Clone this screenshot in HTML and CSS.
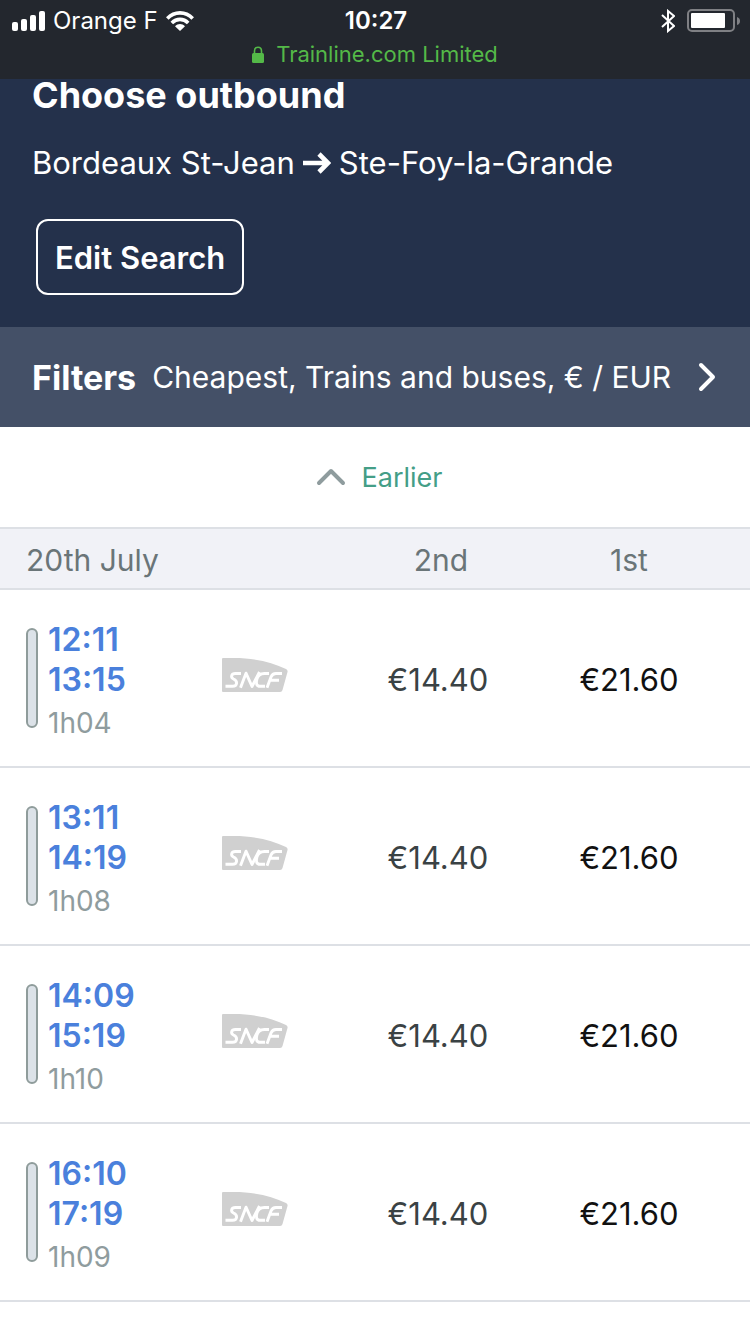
FILE: index.html
```html
<!DOCTYPE html>
<html lang="en">
<head>
    <meta charset="UTF-8">
    <meta name="viewport" content="width=device-width, initial-scale=1.0">
    <title>Choose outbound</title>
    <link rel="stylesheet" href="styles.css">
</head>
<body>
    <!-- SNCF logo, reused in each row -->
    <svg class="sprite" aria-hidden="true">
        <symbol id="sncf" viewBox="0 0 66 34">
            <path d="M1 0H12C32 0 50 4 64 11Q66 12 65.500 14L60.500 32Q60 34 58 34H1Q0 34 0 33V1Q0 0 1 0Z" fill="#d0d0d0"/>
            <g fill="none" stroke="#fff" stroke-width="2.900" stroke-linejoin="round">
                <path d="M19 15.500H13.500C9 15.500 8.500 19.500 11.500 21C16 23 15.500 28.300 10.500 28.300H3.500"/>
                <path d="M18.500 29.800L24 15.200L30 28.500L37.500 14"/>
                <path d="M47 15.500H42.500C38 15.500 35.500 18.500 34.800 21.500C33.800 25.500 34.500 28.300 38 28.300H43"/>
                <path d="M60 15.500H54C51 15.500 49.800 17 49 19L45 29.800M48 22.300H57"/>
            </g>
        </symbol>
    </svg>

    <div class="status-bar">
        <div class="status-row">
            <div class="carrier">
                <svg width="33" height="20" viewBox="0 0 33 20" fill="#fff">
                    <rect x="0" y="11" width="6" height="9" rx="2"/>
                    <rect x="9" y="8" width="6" height="12" rx="2"/>
                    <rect x="18" y="4" width="6" height="16" rx="2"/>
                    <rect x="27" y="0" width="6" height="20" rx="2"/>
                </svg>
                <span>Orange F</span>
                <svg width="28" height="20" viewBox="0 0 28 20">
                    <g fill="none" stroke="#fff" stroke-width="3.600">
                        <path d="M1.300 7.400C8.500 0 19.500 0 26.700 7.400"/>
                        <path d="M5.800 12C10.500 7.200 17.500 7.200 22.200 12"/>
                    </g>
                    <path d="M9 15.200C12 12.400 16 12.400 19 15.200L14 20Z" fill="#fff"/>
                </svg>
            </div>
            <span class="clock">10:27</span>
            <div class="power">
                <svg width="14" height="24" viewBox="0 0 14 24" fill="none" stroke="#fff" stroke-width="2">
                    <path d="M1 6L13 17L7 22V2L13 7L1 18"/>
                </svg>
                <svg width="53" height="24" viewBox="0 0 53 24">
                    <rect x="1" y="1" width="46" height="21" rx="4" fill="none" stroke="#7f8084" stroke-width="2"/>
                    <rect x="4" y="4" width="34" height="15" rx="1" fill="#fff"/>
                    <path d="M50 8Q53 9 53 12T50 16Z" fill="#7f8084"/>
                </svg>
            </div>
        </div>
        <div class="site">
            <svg width="12" height="17" viewBox="0 0 12 17">
                <path d="M2.500 8V5C2.500 0 9.500 0 9.500 5V8" fill="none" stroke="#54b948" stroke-width="1.600"/>
                <rect y="7" width="12" height="10" rx="1.500" fill="#54b948"/>
            </svg>
            <span>Trainline.com Limited</span>
        </div>
    </div>

    <header class="search-header">
        <h1>Choose outbound</h1>
        <p class="route">
            <span>Bordeaux St-Jean</span>
            <svg width="28" height="22" viewBox="0 0 28 22" fill="none" stroke="#fff" stroke-width="4.600" role="img" aria-label="to">
                <path d="M0 11H24M16 2L25 11L16 20"/>
            </svg>
            <span>Ste-Foy-la-Grande</span>
        </p>
        <button class="edit-btn" type="button">Edit Search</button>
    </header>

    <button class="filters" type="button">
        <strong>Filters</strong>
        <span class="filter-values">Cheapest, Trains and buses, € / EUR</span>
        <svg width="18" height="30" viewBox="0 0 18 30" fill="none" stroke="#fff" stroke-width="4" stroke-linecap="round" stroke-linejoin="round">
            <path d="M3 3L15 15L3 27"/>
        </svg>
    </button>

    <a class="earlier" href="#">
        <svg width="30" height="18" viewBox="0 0 30 18" fill="none" stroke="#8f9c9e" stroke-width="4" stroke-linecap="round" stroke-linejoin="round">
            <path d="M3 15L15 3L27 15"/>
        </svg>
        <span>Earlier</span>
    </a>

    <table class="trains">
        <thead>
            <tr>
                <th class="col-time" scope="col">20th July</th>
                <th class="col-logo"></th>
                <th class="col-second" scope="col">2nd</th>
                <th class="col-first" scope="col">1st</th>
            </tr>
        </thead>
        <tbody>
            <tr>
                <td>
                    <div class="journey">
                        <span class="bar"></span>
                        <div class="times">
                            <time>12:11</time>
                            <time>13:15</time>
                            <span class="duration">1h04</span>
                        </div>
                    </div>
                </td>
                <td><svg class="logo" role="img" aria-label="SNCF"><use href="#sncf"/></svg></td>
                <td class="second">€14.40</td>
                <td class="first">€21.60</td>
            </tr>
            <tr>
                <td>
                    <div class="journey">
                        <span class="bar"></span>
                        <div class="times">
                            <time>13:11</time>
                            <time>14:19</time>
                            <span class="duration">1h08</span>
                        </div>
                    </div>
                </td>
                <td><svg class="logo" role="img" aria-label="SNCF"><use href="#sncf"/></svg></td>
                <td class="second">€14.40</td>
                <td class="first">€21.60</td>
            </tr>
            <tr>
                <td>
                    <div class="journey">
                        <span class="bar"></span>
                        <div class="times">
                            <time>14:09</time>
                            <time>15:19</time>
                            <span class="duration">1h10</span>
                        </div>
                    </div>
                </td>
                <td><svg class="logo" role="img" aria-label="SNCF"><use href="#sncf"/></svg></td>
                <td class="second">€14.40</td>
                <td class="first">€21.60</td>
            </tr>
            <tr>
                <td>
                    <div class="journey">
                        <span class="bar"></span>
                        <div class="times">
                            <time>16:10</time>
                            <time>17:19</time>
                            <span class="duration">1h09</span>
                        </div>
                    </div>
                </td>
                <td><svg class="logo" role="img" aria-label="SNCF"><use href="#sncf"/></svg></td>
                <td class="second">€14.40</td>
                <td class="first">€21.60</td>
            </tr>
        </tbody>
    </table>
</body>
</html>
```
FILE: styles.css
```css
* {
    box-sizing: border-box;
}

body {
    font-family: Inter, "Liberation Sans", sans-serif;
    font-size: 31px;
    background-color: #fff;
    color: #111;
    margin: 0;
}

svg {
    display: block;
    flex: none;
}

button {
    font-family: inherit;
    color: #fff;
    cursor: pointer;
}

.sprite {
    display: none;
}

/* Phone status bar */
.status-bar {
    background-color: #23272e;
    color: #fff;
    height: 79px;
    font-size: 24px;
}

.status-row {
    display: grid;
    grid-template-columns: 1fr auto 1fr;
    align-items: center;
    height: 41px;
    padding: 0 10px 0 12px;
}

.carrier, .power {
    display: flex;
    align-items: center;
    gap: 8px;
}

.clock {
    font-weight: 600;
}

.power {
    justify-content: flex-end;
    gap: 12px;
}

.site {
    display: flex;
    justify-content: center;
    align-items: center;
    gap: 12px;
    font-size: 22px;
    line-height: 26px;
    color: #54b948;
}

/* Search header */
.search-header {
    background-color: #24314b;
    color: #fff;
    padding: 0 32px 32px;
}

h1 {
    font-size: 36px;
    font-weight: 700;
    line-height: 32px;
    margin: 0;
}

.route {
    display: flex;
    align-items: center;
    gap: 8px;
    line-height: 40px;
    margin: 32px 0 36px;
}

.edit-btn {
    display: block;
    height: 76px;
    margin-left: 4px;
    padding: 0 17px;
    background: none;
    border: 2px solid #fff;
    border-radius: 12px;
    font-size: 31px;
    font-weight: 600;
}

/* Filters */
.filters {
    display: flex;
    align-items: center;
    gap: 16px;
    width: 100%;
    height: 100px;
    padding: 0 34px 0 32px;
    border: none;
    background-color: #445067;
    text-align: left;
    font-size: 30px;
}

.filters strong {
    font-size: 34px;
}

.filter-values {
    flex: 1;
    white-space: nowrap;
}

.earlier {
    display: flex;
    justify-content: center;
    align-items: center;
    gap: 16px;
    height: 100px;
    padding-left: 8px;
    color: #449e87;
    font-size: 27px;
    text-decoration: none;
}

/* Train list */
.trains {
    width: 100%;
    table-layout: fixed;
    border-spacing: 0;
}

th, td {
    padding: 0;
    border-bottom: 2px solid #dde0e5;
    text-align: center;
}

th {
    height: 63px;
    padding-top: 2px;
    border-top: 2px solid #dde0e5;
    background-color: #f1f2f7;
    color: #6a7578;
    font-size: 30px;
    font-weight: 400;
}

td {
    height: 178px;
}

.col-time {
    width: 29.6%;
    padding-left: 26px;
    text-align: left;
}

.col-logo {
    width: 16%;
}

.col-second {
    width: 25.6%;
    padding-left: 6px;
}

.col-first, .first {
    padding-right: 26px;
}

.second, .first {
    padding-top: 2px;
}

.second {
    color: #3a4244;
}

.journey {
    display: flex;
    align-items: center;
    gap: 10px;
    padding-left: 26px;
    text-align: left;
}

.bar {
    width: 12px;
    height: 100px;
    border: 2px solid #8f9c9b;
    border-radius: 6px;
    background-color: #dce2e8;
}

.times {
    padding-top: 10px;
}

.times time {
    display: block;
    line-height: 40px;
    color: #4a80dc;
    font-size: 32px;
    font-weight: 600;
}

.duration {
    display: block;
    line-height: 46px;
    color: #8f9c9e;
    font-size: 28px;
}

.logo {
    width: 66px;
    height: 34px;
    margin-bottom: 6px;
}
```
